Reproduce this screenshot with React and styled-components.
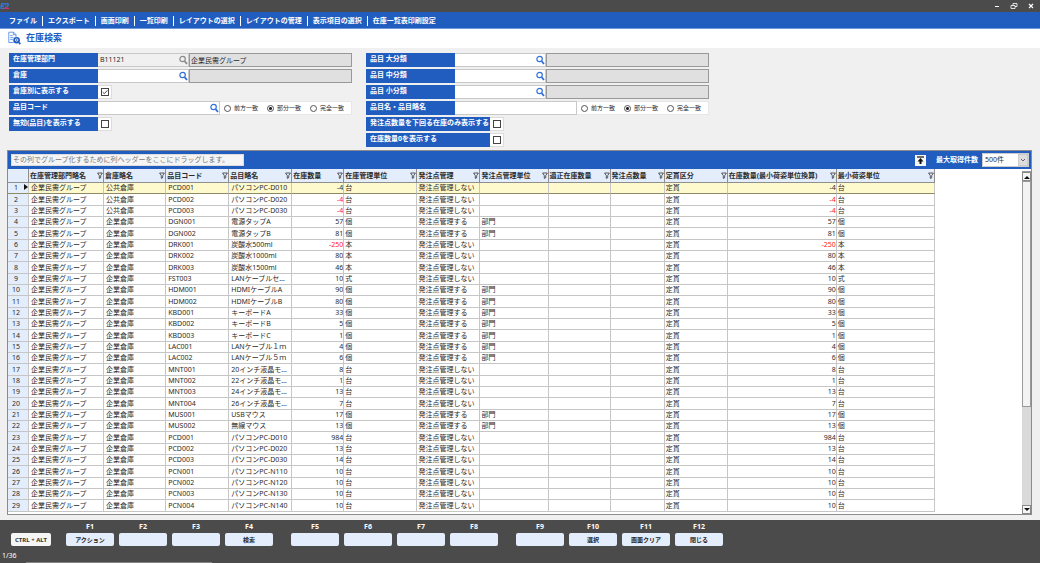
import React, { useState } from 'react';
import styled, { createGlobalStyle } from 'styled-components';

const GlobalStyle = createGlobalStyle`
  * {
    box-sizing: border-box;
  }
  body {
    margin: 0;
    background: #f0f0f0;
    color: #2b2b2b;
    font-family: 'Noto Sans', 'Noto Sans CJK JP', sans-serif;
    font-size: 7px;
    line-height: 10px;
  }
  button, input, select {
    margin: 0;
    padding: 0;
    border: none;
    border-radius: 0;
    font: inherit;
    color: inherit;
  }
`;

const Page = styled.div`
  display: flex;
  flex-direction: column;
  height: 100vh;
  overflow: hidden;
`;

const TitleBar = styled.header`
  display: flex;
  flex: none;
  align-items: center;
  justify-content: space-between;
  height: 12px;
  padding-right: 5px;
  background: #4b4b4b;

  svg {
    display: block;
  }
`;

const WindowButtons = styled.div`
  display: flex;
  gap: 9px;
`;

const WindowButton = styled.button`
  width: 8px;
  height: 8px;
  background: none;
`;

const MenuBar = styled.nav`
  display: flex;
  flex: none;
  align-items: center;
  height: 17px;
  padding: 1px 0 0 4px;
  background: #215dbf;
  border-bottom: 1px solid #6d97d8;
`;

const MenuItem = styled.a`
  padding: 0 5px;
  color: #fff;
  font-weight: bold;
  text-decoration: none;
  white-space: nowrap;

  & + & {
    border-left: 1px solid #fff;
  }
`;

const Heading = styled.div`
  display: flex;
  flex: none;
  align-items: center;
  gap: 5px;
  height: 19px;
  padding: 0 8px 2px;
  background: #fff;

  h1 {
    margin: 0;
    color: #215dbf;
    font-size: 9px;
    line-height: 12px;
  }
`;

const SearchForm = styled.form`
  display: flex;
  flex: none;
  gap: 14px;
  padding: 5px 9px 3px;
`;

const FormColumn = styled.div`
  display: flex;
  flex-direction: column;
  gap: 2px;
  width: 343px;
`;

const FieldRow = styled.div`
  display: flex;
  height: 14px;
`;

const Label = styled.label`
  flex: none;
  width: ${props => (props.$wide ? '124px' : '89px')};
  padding: 1px 4px;
  background: #215dbf;
  color: #fff;
  font-weight: bold;
  white-space: nowrap;
`;

const LookupBox = styled.div`
  display: flex;
  flex: none;
  align-items: center;
  width: ${props => (props.$wide ? '122px' : '91px')};
  background: ${props => (props.$disabled ? '#f0f0f0' : '#fff')};
  border: 1px solid #c8c8c8;
  border-left: none;

  input {
    flex: 1;
    min-width: 0;
    height: 10px;
    padding: 0 2px;
    background: transparent;
    outline: none;
  }
`;

const LookupButton = styled.button`
  flex: none;
  width: 9px;
  height: 10px;
  background: none;

  svg {
    display: block;
  }
`;

const NameOutput = styled.input`
  flex: 1;
  min-width: 0;
  height: 14px;
  padding: 0 1px !important;
  background: #e0e0e0;
  border: 1px solid #999 !important;
`;

const CheckCell = styled.div`
  display: flex;
  align-items: center;
  justify-content: center;
  width: 14px;
  background: #fff;
  border: 1px solid #dcdcdc;
  border-left: none;
`;

const Checkbox = styled.input`
  width: 8px;
  height: 8px;
  appearance: none;
  background: #fff;
  border: 1px solid #444 !important;

  &:checked {
    background: #fff url("data:image/svg+xml,%3Csvg xmlns='http://www.w3.org/2000/svg' viewBox='0 0 6 6'%3E%3Cpath d='M.7 3.1 2.3 4.7 5.4 1.3' fill='none' stroke='%23333' stroke-width='.9'/%3E%3C/svg%3E");
  }
`;

const RadioGroup = styled.div`
  display: flex;
  flex: 1;
  align-items: center;
  gap: 9px;
  padding-left: 4px;
  background: #fff;
  border: 1px solid #e6e6e6;
  border-left: none;

  label {
    display: flex;
    align-items: center;
    gap: 3px;
    font-size: 6px;
    white-space: nowrap;
  }
`;

const Radio = styled.input`
  width: 7px;
  height: 7px;
  appearance: none;
  border: 1px solid #555 !important;
  border-radius: 50% !important;

  &:checked {
    background: radial-gradient(circle at center, #222 0 1px, #fff 2px);
  }
`;

const GridPanel = styled.main`
  display: flex;
  flex: 1;
  flex-direction: column;
  min-height: 0;
  margin: 0 8px 5px 7px;
  background: #fff;
  border: 1px solid #8c8c8c;
`;

const GridBar = styled.div`
  display: flex;
  flex: none;
  align-items: center;
  height: 18px;
  padding: 0 2px 0 3px;
  background: #215dbf;
  color: #fff;
`;

const GroupHint = styled.div`
  width: 233px;
  height: 12px;
  padding: 0 1px;
  background: #f5f5f5;
  border: 1px solid #ddd;
  color: #777;
  white-space: nowrap;
`;

const CollapseButton = styled.button`
  width: 11px;
  height: 11px;
  margin: 0 10px 0 auto !important;
  background: #f5f5f5;

  svg {
    display: block;
  }
`;

const LimitLabel = styled.label`
  display: flex;
  align-items: center;
  gap: 4px;
  font-weight: bold;
  white-space: nowrap;
`;

const LimitSelect = styled.select`
  width: 47px;
  height: 14px;
  padding: 0 2px !important;
  appearance: none;
  background: #fff url("data:image/svg+xml,%3Csvg xmlns='http://www.w3.org/2000/svg' width='10' height='12' viewBox='0 0 10 12'%3E%3Cpath d='M0 0h10v12H0z' fill='%23ddd' stroke='%23bbb'/%3E%3Cpath d='M3 5l2 2 2-2' fill='none' stroke='%23666'/%3E%3C/svg%3E") no-repeat right center;
  border: 1px solid #ccc !important;
  color: #2b2b2b !important;
  font-weight: normal !important;
`;

const GridBody = styled.div`
  display: flex;
  flex: 1;
  min-height: 0;
`;

const TableScroll = styled.div`
  flex: 1;
  min-width: 0;
  overflow: hidden;
`;

const Table = styled.table`
  width: 927px;
  table-layout: fixed;
  border-collapse: separate;
  border-spacing: 0;

  th, td {
    padding: 0 1px 0 2px;
    border-right: 1px solid #c6c6c6;
    border-bottom: 1px solid #c6c6c6;
    overflow: hidden;
    text-align: left;
    white-space: nowrap;
  }

  td:nth-child(n + 7) {
    padding-left: 1px;
  }

  th {
    background: #e4edfc;
  }

  thead th {
    height: 14px;
    padding: 0 0 0 1px;
    border-right-color: #8f8f8f;
    border-bottom-color: #8f8f8f;
  }
`;

const HeadCell = styled.div`
  display: flex;
  align-items: center;
  justify-content: space-between;

  svg {
    flex: none;
  }
`;

const Row = styled.tr`
  height: 11px;

  &:nth-child(3n + 2) {
    height: 12px;
  }

  td, th {
    line-height: 10px;
    ${props => props.$selected && 'border-bottom-color: #8f8a66;'}
  }

  td {
    background: ${props => (props.$selected ? '#fffacd' : '#fff')};
  }
`;

const RowHeader = styled.th`
  font-weight: normal;

  span {
    display: inline-block;
    width: 12px;
    text-align: center;
  }

  svg {
    margin-left: 2px;
  }
`;

const NumberCell = styled.td`
  text-align: right !important;
  padding-right: 0 !important;
  color: ${props => (props.$negative ? '#ff2020' : 'inherit')};
`;

const ScrollBar = styled.div`
  display: flex;
  flex: none;
  flex-direction: column;
  width: 9px;
  margin-top: 2px;
  background: #dadada;
  border-top: 1px solid #999;
`;

const ScrollButton = styled.button`
  flex: none;
  height: 9px;
  background: #f5f5f5;
  border: 1px solid #888 !important;

  svg {
    display: block;
    margin: auto;
  }
`;

const ScrollThumb = styled.div`
  height: 66%;
  background: #f3f3f3;
  border: 1px solid #999;
`;

const ScrollTrack = styled.div`
  flex: 1;
`;

const Footer = styled.footer`
  flex: none;
  background: #4b4b4b;
  color: #fff;
`;

const KeyBar = styled.div`
  display: flex;
  align-items: flex-end;
  gap: 18px;
  padding: 2px 11px 0;
`;

const KeyGroup = styled.div`
  display: flex;
  gap: 5px;
`;

const Key = styled.label`
  display: flex;
  flex-direction: column;
  width: 48px;
  font-weight: bold;
  text-align: center;
`;

const KeyButton = styled.button`
  height: 13px;
  margin-top: 1px !important;
  background: #e4edfc;
  border-radius: 2px !important;
  color: #222 !important;
  font-size: 6px !important;
`;

const ModifierButton = styled.button`
  width: 40px;
  height: 13px;
  margin-right: -3px !important;
  background: #f5f5f5;
  border-radius: 2px !important;
  color: #333 !important;
  font-size: 6px !important;
  font-weight: bold !important;
  white-space: nowrap;
`;

const Status = styled.div`
  padding: 5px 2px 1px;
`;

const StatusLine = styled.div`
  width: 186px;
  height: 1px;
  margin-left: 26px;
  background: #858585;
`;

const menuItems = [
  'ファイル',
  'エクスポート',
  '画面印刷',
  '一覧印刷',
  'レイアウトの選択',
  'レイアウトの管理',
  '表示項目の選択',
  '在庫一覧表印刷設定'
];

const columns = [
  ['在庫管理部門略名', 75],
  ['倉庫略名', 62],
  ['品目コード', 63],
  ['品目略名', 63],
  ['在庫数量', 52],
  ['在庫管理単位', 73],
  ['発注点管理', 63],
  ['発注点管理単位', 68],
  ['適正在庫数量', 62],
  ['発注点数量', 54],
  ['定貫区分', 63],
  ['在庫数量(最小荷姿単位換算)', 109],
  ['最小荷姿単位', 98]
];

// [倉庫, コード, 品目, 数量, 単位, 発注点管理の有無]
const items = [
  ['公共倉庫', 'PCD001', 'パソコンPC-D010', -4, '台', false],
  ['公共倉庫', 'PCD002', 'パソコンPC-D020', -4, '台', false],
  ['公共倉庫', 'PCD003', 'パソコンPC-D030', -4, '台', false],
  ['企業倉庫', 'DGN001', '電源タップA', 57, '個', true],
  ['企業倉庫', 'DGN002', '電源タップB', 81, '個', true],
  ['企業倉庫', 'DRK001', '炭酸水500ml', -250, '本', false],
  ['企業倉庫', 'DRK002', '炭酸水1000ml', 80, '本', false],
  ['企業倉庫', 'DRK003', '炭酸水1500ml', 46, '本', false],
  ['企業倉庫', 'FST003', 'LANケーブルセ…', 10, '式', false],
  ['企業倉庫', 'HDM001', 'HDMIケーブルA', 90, '個', true],
  ['企業倉庫', 'HDM002', 'HDMIケーブルB', 80, '個', true],
  ['企業倉庫', 'KBD001', 'キーボードA', 33, '個', true],
  ['企業倉庫', 'KBD002', 'キーボードB', 5, '個', true],
  ['企業倉庫', 'KBD003', 'キーボードC', 1, '個', true],
  ['企業倉庫', 'LAC001', 'LANケーブル１ｍ', 4, '個', true],
  ['企業倉庫', 'LAC002', 'LANケーブル５ｍ', 6, '個', true],
  ['企業倉庫', 'MNT001', '20インチ液晶モ…', 8, '台', false],
  ['企業倉庫', 'MNT002', '22インチ液晶モ…', 1, '台', false],
  ['企業倉庫', 'MNT003', '24インチ液晶モ…', 13, '台', false],
  ['企業倉庫', 'MNT004', '26インチ液晶モ…', 7, '台', false],
  ['企業倉庫', 'MUS001', 'USBマウス', 17, '個', true],
  ['企業倉庫', 'MUS002', '無線マウス', 13, '個', true],
  ['企業倉庫', 'PCD001', 'パソコンPC-D010', 984, '台', false],
  ['企業倉庫', 'PCD002', 'パソコンPC-D020', 13, '台', false],
  ['企業倉庫', 'PCD003', 'パソコンPC-D030', 14, '台', false],
  ['企業倉庫', 'PCN001', 'パソコンPC-N110', 10, '台', false],
  ['企業倉庫', 'PCN002', 'パソコンPC-N120', 10, '台', false],
  ['企業倉庫', 'PCN003', 'パソコンPC-N130', 10, '台', false],
  ['企業倉庫', 'PCN004', 'パソコンPC-N140', 10, '台', false]
];

const keyGroups = [
  [['F1', 'アクション'], ['F2', ''], ['F3', ''], ['F4', '検索']],
  [['F5', ''], ['F6', ''], ['F7', ''], ['F8', '']],
  [['F9', ''], ['F10', '選択'], ['F11', '画面クリア'], ['F12', '閉じる']]
];

const SearchIcon = ({ color }) => (
  <svg width="9" height="10" viewBox="0 0 9 10" fill="none" stroke={color}>
    <circle cx="3.6" cy="4" r="2.7" strokeWidth="1.2" />
    <path d="M5.6 6.2 8 9" strokeWidth="1.8" />
  </svg>
);

const FilterIcon = () => (
  <svg width="6" height="7" viewBox="0 0 6 7" fill="none" stroke="#333" strokeWidth="0.8">
    <path d="M.6 1h4.8L3.7 3.6v2.2L2.3 6.4V3.6z" />
  </svg>
);

const Lookup = ({ id, label, value = '', name = '', disabled }) => (
  <FieldRow>
    <Label htmlFor={id}>{label}</Label>
    <LookupBox $disabled={disabled}>
      <input id={id} defaultValue={value} readOnly={disabled} />
      <LookupButton type="button" aria-label={`${label}検索`} disabled={disabled}>
        <SearchIcon color={disabled ? '#8a8a8a' : '#2f6fdb'} />
      </LookupButton>
    </LookupBox>
    <NameOutput aria-label={`${label}名称`} value={name} readOnly />
  </FieldRow>
);

const MatchRadios = ({ name }) => (
  <RadioGroup>
    {['前方一致', '部分一致', '完全一致'].map((text) => (
      <label key={text}>
        <Radio type="radio" name={name} defaultChecked={text === '部分一致'} />
        {text}
      </label>
    ))}
  </RadioGroup>
);

const CheckField = ({ id, label, wide, checked }) => (
  <FieldRow>
    <Label htmlFor={id} $wide={wide}>{label}</Label>
    <CheckCell>
      <Checkbox id={id} type="checkbox" defaultChecked={checked} />
    </CheckCell>
  </FieldRow>
);

const App = () => {
  const [selected, setSelected] = useState(0);

  return (
    <Page>
      <GlobalStyle />
      <TitleBar>
        <svg width="10" height="8" viewBox="0 0 10 8" fill="none" strokeWidth="1.3">
          <path d="M4.8 1.6H2Q.6 4 1.2 6.4H5M1 4h3" stroke="#2f7be0" />
          <path d="M5 3.4Q5.6 1.2 7.6 1.6 9 2.4 7.6 4L6.4 5.2" stroke="#2f7be0" />
          <path d="M6.4 5.2 5.2 6.4H9" stroke="#d6336c" />
        </svg>
        <WindowButtons>
          <WindowButton aria-label="最小化">
            <svg width="8" height="8" stroke="#fff"><path d="M2 4.5h4" /></svg>
          </WindowButton>
          <WindowButton aria-label="元に戻す">
            <svg width="8" height="8" fill="none" stroke="#fff" strokeWidth="0.8">
              <path d="M1 3.5h4v3H1zM3 3.5v-2h4v3H5" />
            </svg>
          </WindowButton>
          <WindowButton aria-label="ウィンドウを閉じる">
            <svg width="8" height="8" stroke="#fff" strokeWidth="1.2"><path d="M2 2l4 4M6 2 2 6" /></svg>
          </WindowButton>
        </WindowButtons>
      </TitleBar>

      <MenuBar>
        {menuItems.map((item) => (
          <MenuItem key={item} href="#">{item}</MenuItem>
        ))}
      </MenuBar>

      <Heading>
        <svg width="13" height="14" viewBox="0 0 13 14" fill="none" stroke="#5b8ee6">
          <path d="M5.5 11.5H.8V1.2h4.8L8 3.6v2.6M5.4 1.2v2.6H8" strokeWidth="0.9" />
          <path d="M2.2 4.6h2.4M2.2 6.6h3.4M2.2 8.6h2.6" strokeWidth="0.9" />
          <circle cx="8.6" cy="9.2" r="3.3" fill="#215dbf" stroke="none" />
          <circle cx="8.6" cy="9" r="1.2" stroke="#fff" strokeWidth="0.8" />
          <path d="M10.6 11.2l1.8 1.9" stroke="#215dbf" strokeWidth="1.6" />
        </svg>
        <h1>在庫検索</h1>
      </Heading>

      <SearchForm onSubmit={(e) => e.preventDefault()}>
        <FormColumn>
          <Lookup id="dept" label="在庫管理部門" value="B11121" name="企業民需グループ" disabled />
          <Lookup id="warehouse" label="倉庫" />
          <CheckField id="byWarehouse" label="倉庫別に表示する" checked />
          <FieldRow>
            <Label htmlFor="itemCode">品目コード</Label>
            <LookupBox $wide>
              <input id="itemCode" />
              <LookupButton type="button" aria-label="品目コード検索">
                <SearchIcon color="#2f6fdb" />
              </LookupButton>
            </LookupBox>
            <MatchRadios name="codeMatch" />
          </FieldRow>
          <CheckField id="showInvalid" label="無効(品目)を表示する" />
        </FormColumn>
        <FormColumn>
          <Lookup id="large" label="品目 大分類" />
          <Lookup id="middle" label="品目 中分類" />
          <Lookup id="small" label="品目 小分類" />
          <FieldRow>
            <Label htmlFor="itemName">品目名・品目略名</Label>
            <LookupBox $wide>
              <input id="itemName" />
            </LookupBox>
            <MatchRadios name="nameMatch" />
          </FieldRow>
          <CheckField id="belowPoint" label="発注点数量を下回る在庫のみ表示する" wide />
          <CheckField id="showZero" label="在庫数量0を表示する" wide />
        </FormColumn>
      </SearchForm>

      <GridPanel>
        <GridBar>
          <GroupHint>その列でグループ化するために列ヘッダーをここにドラッグします。</GroupHint>
          <CollapseButton aria-label="検索条件を隠す">
            <svg width="11" height="11" fill="none" stroke="#111">
              <path d="M2 2h7" strokeWidth="1.2" />
              <path d="M5.5 9V5" strokeWidth="2" />
              <path d="M2.5 6.5 5.5 3l3 3.5z" fill="#111" stroke="none" />
            </svg>
          </CollapseButton>
          <LimitLabel>
            最大取得件数
            <LimitSelect defaultValue="500">
              <option value="500">500件</option>
            </LimitSelect>
          </LimitLabel>
        </GridBar>
        <GridBody>
          <TableScroll>
            <Table>
              <colgroup>
                <col width="21" />
                {columns.map(([name, width]) => (
                  <col key={name} width={width} />
                ))}
              </colgroup>
              <thead>
                <tr>
                  <th />
                  {columns.map(([name]) => (
                    <th key={name}>
                      <HeadCell>{name}<FilterIcon /></HeadCell>
                    </th>
                  ))}
                </tr>
              </thead>
              <tbody>
                {items.map(([warehouse, code, name, qty, unit, managed], i) => (
                  <Row key={i} $selected={i === selected} onClick={() => setSelected(i)}>
                    <RowHeader scope="row">
                      <span>{i + 1}</span>
                      {i === selected && (
                        <svg width="4" height="6"><path d="M0 0l4 3-4 3z" fill="#111" /></svg>
                      )}
                    </RowHeader>
                    <td>企業民需グループ</td>
                    <td>{warehouse}</td>
                    <td>{code}</td>
                    <td>{name}</td>
                    <NumberCell $negative={qty < 0 && i !== selected}>{qty}</NumberCell>
                    <td>{unit}</td>
                    <td>{managed ? '発注点管理する' : '発注点管理しない'}</td>
                    <td>{managed ? '部門' : ''}</td>
                    <td />
                    <td />
                    <td>定貫</td>
                    <NumberCell $negative={qty < 0 && i !== selected}>{qty}</NumberCell>
                    <td>{unit}</td>
                  </Row>
                ))}
              </tbody>
            </Table>
          </TableScroll>
          <ScrollBar>
            <ScrollButton aria-label="上へ">
              <svg width="6" height="4"><path d="M0 4l3-3 3 3z" fill="#111" /></svg>
            </ScrollButton>
            <ScrollThumb />
            <ScrollTrack />
            <ScrollButton aria-label="下へ">
              <svg width="6" height="4"><path d="M0 0l3 3 3-3z" fill="#111" /></svg>
            </ScrollButton>
          </ScrollBar>
        </GridBody>
      </GridPanel>

      <Footer>
        <KeyBar>
          <ModifierButton>CTRL + ALT</ModifierButton>
          {keyGroups.map((group) => (
            <KeyGroup key={group[0][0]}>
              {group.map(([key, text]) => (
                <Key key={key}>
                  {key}
                  <KeyButton>{text}</KeyButton>
                </Key>
              ))}
            </KeyGroup>
          ))}
        </KeyBar>
        <Status>1/36</Status>
        <StatusLine />
      </Footer>
    </Page>
  );
};

export default App;
